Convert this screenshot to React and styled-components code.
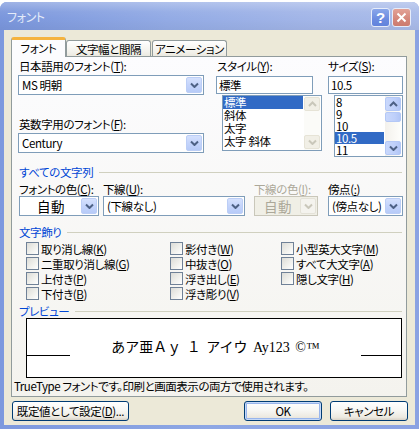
import React from "react";
import styled, { createGlobalStyle, css } from "styled-components";

const Global = createGlobalStyle`
  html, body { margin: 0; padding: 0; background: #ffffff; }
  body {
    font-family: "Noto Sans CJK JP", "Noto Sans", sans-serif;
    font-size: 11.5px;
    letter-spacing: -0.4px;
    color: #000;
    font-feature-settings: "palt";
  }
  * { box-sizing: border-box; }
  u { text-decoration: underline; text-underline-offset: 1px; text-decoration-thickness: 1px; }
`;

const Page = styled.div`
  width: 419px;
  height: 429px;
  padding-top: 2px;
  background: #ffffff;
  overflow: hidden;
`;

const Window = styled.div`
  width: 419px;
  height: 427px;
  display: flex;
  flex-direction: column;
  border-radius: 7px 7px 0 0;
  overflow: hidden;
  background: linear-gradient(90deg, #7d99de, #8ea7e4 50%, #8aa2e2);
`;

const TitleBar = styled.div`
  height: 28px;
  flex: none;
  display: flex;
  align-items: center;
  gap: 2px;
  padding: 2px 8px 0 7px;
  background:
    linear-gradient(180deg, rgba(255,255,255,0.28) 0, rgba(255,255,255,0.05) 35%, rgba(255,255,255,0) 60%, rgba(0,0,0,0.04) 100%),
    linear-gradient(90deg, #7a96dc 0%, #93abe5 40%, #a3b6e8 75%, #a9bbe9 100%);
`;

const Title = styled.div`
  flex: 1;
  color: #e4ebf9;
  font-size: 12px;
  line-height: 14px;
`;

const CaptionButton = styled.div`
  width: 19px;
  height: 19px;
  border-radius: 3px;
  border: 1px solid #e6ecfa;
  display: flex;
  align-items: center;
  justify-content: center;
  color: #fff;
  font-family: "Liberation Sans", sans-serif;
  font-weight: bold;
  font-size: 15px;
  letter-spacing: 0;
  line-height: 1;
  ${(p) =>
    p.$close
      ? css`background: linear-gradient(180deg, #e2a297, #d4867a 60%, #cc7b6f);`
      : css`background: linear-gradient(180deg, #8aa7ea, #6b8be0 60%, #6283dc);`}
`;

const Body = styled.div`
  flex: 1;
  margin: 0 4px 4px;
  background: #ece9d8;
  padding: 7px 8px 4px 7px;
  display: flex;
  flex-direction: column;
`;

const TabStrip = styled.div`
  height: 20px;
  margin-bottom: -1px;
  display: flex;
  align-items: flex-end;
  position: relative;
  z-index: 2;
`;

const Tab = styled.div`
  display: flex;
  align-items: center;
  justify-content: center;
  border: 1px solid #919b9c;
  border-radius: 3px 3px 0 0;
  line-height: 14px;
  white-space: nowrap;
  width: ${(p) => p.$w}px;
  margin-left: ${(p) => p.$ml || 0}px;
  ${(p) =>
    p.$active
      ? css`
          height: 20px;
          border-bottom: none;
          border-top: 3px solid #f5b33e;
          background: #fcfcfe;
          padding-bottom: 1px;
        `
      : css`
          height: 16px;
          margin-bottom: 1px;
          border-bottom: none;
          background: linear-gradient(180deg, #ffffff, #f3f2ec 70%, #ebe9e0);
        `}
`;

const Panel = styled.div`
  height: 341px;
  border: 1px solid #919b9c;
  background: linear-gradient(180deg, #fcfcfe, #f4f3ee);
  padding: 2px 3px 0 6px;
  display: flex;
  flex-direction: column;
`;

const TopRow = styled.div`
  display: flex;
  align-items: flex-start;
  height: 98px;
`;

const Col = styled.div`
  display: flex;
  flex-direction: column;
  width: ${(p) => p.$w}px;
  margin-left: ${(p) => p.$ml || 0}px;
`;

const Label = styled.div`
  height: 14px;
  line-height: 14px;
  white-space: nowrap;
  margin-top: ${(p) => p.$mt || 0}px;
  margin-left: ${(p) => p.$ml || 0}px;
  color: ${(p) => (p.$disabled ? "#aca899" : "#000")};
`;

const ComboBox = styled.div`
  height: 20px;
  margin-top: ${(p) => p.$mt || 0}px;
  border: 1px solid ${(p) => (p.$disabled ? "#c9c7ba" : "#7f9db9")};
  background: ${(p) => (p.$disabled ? "#f0efe6" : "#ffffff")};
  display: flex;
  align-items: center;
  padding: 1px;
`;

const ComboText = styled.div`
  flex: 1;
  line-height: 16px;
  padding-left: ${(p) => (p.$center ? 0 : 2)}px;
  text-align: ${(p) => (p.$center ? "center" : "left")};
  font-size: ${(p) => (p.$center ? "13.5px" : "inherit")};
  letter-spacing: ${(p) => (p.$center ? "0.5px" : "inherit")};
  color: ${(p) => (p.$disabled ? "#aca899" : "#000")};
  white-space: nowrap;
`;

const DropButton = styled.div`
  width: 16px;
  height: 16px;
  border-radius: 2px;
  display: flex;
  align-items: center;
  justify-content: center;
  ${(p) =>
    p.$disabled
      ? css`
          background: #f4f3ee;
          border: 1px solid #e4e2d8;
        `
      : css`
          background: linear-gradient(180deg, #d5e1fd, #c4d4fb 50%, #b7cbf8);
          border: 1px solid #bccef6;
        `}
`;

const TextBox = styled.div`
  height: 18px;
  margin-top: 3px;
  width: ${(p) => p.$w}px;
  border: 1px solid #7f9db9;
  background: #ffffff;
  line-height: 16px;
  padding-left: 2px;
`;

const ListBox = styled.div`
  margin-top: 1px;
  margin-left: 6px;
  width: ${(p) => p.$w}px;
  height: ${(p) => p.$h}px;
  border: 1px solid #7f9db9;
  background: #ffffff;
  display: flex;
  padding: 0 1px 0 0;
`;

const Items = styled.div`
  flex: 1;
  margin-right: 1px;
`;

const Item = styled.div`
  height: ${(p) => p.$h || 12}px;
  line-height: ${(p) => p.$h || 12}px;
  padding-left: 1px;
  white-space: nowrap;
  ${(p) =>
    p.$sel &&
    css`
      background: #316ac5;
      color: #ffffff;
    `}
`;

const ScrollBar = styled.div`
  width: 16px;
  padding: 1px 0;
  display: flex;
  flex-direction: column;
  background: ${(p) => (p.$disabled ? "#fbfbf8" : "linear-gradient(90deg, #f3f1ec, #fefefb)")};
`;

const ScrollBtn = styled.div`
  height: 14px;
  border-radius: 2px;
  display: flex;
  align-items: center;
  justify-content: center;
  ${(p) =>
    p.$disabled
      ? css`
          background: #f1efe6;
          border: 1px solid #e6e3d6;
        `
      : css`
          background: linear-gradient(90deg, #c9d8fc, #bfd0fa 60%, #b2c6f6);
          border: 1px solid #b4c8f6;
        `}
`;

const Track = styled.div`
  flex: 1;
  display: flex;
  flex-direction: column;
  padding-top: 1px;
`;

const Thumb = styled.div`
  height: 10px;
  border-radius: 2px;
  border: 1px solid #b4c8f6;
  background: linear-gradient(90deg, #c9d8fc, #bfd0fa 60%, #b2c6f6);
`;

const GroupHeader = styled.div`
  display: flex;
  align-items: center;
  height: 14px;
  margin-top: ${(p) => p.$mt}px;
  margin-left: 1px;
  margin-right: 1px;
  color: #0046d5;
  line-height: 14px;
  white-space: nowrap;
  &::after {
    content: "";
    flex: 1;
    height: 1px;
    margin-left: 6px;
    background: #d0d0bf;
  }
`;

const FieldsRow = styled.div`
  display: flex;
  margin-top: 3px;
`;

const Field = styled.div`
  width: ${(p) => p.$w}px;
  margin-left: ${(p) => p.$ml}px;
  display: flex;
  flex-direction: column;
`;

const Checks = styled.div`
  margin-top: 2px;
  margin-left: 8px;
  display: grid;
  grid-template-columns: 144px 111px 1fr;
  grid-template-rows: repeat(4, 15px);
  grid-auto-flow: column;
`;

const CheckRow = styled.label`
  display: flex;
  align-items: center;
  gap: 2px;
  white-space: nowrap;
  line-height: 14px;
`;

const Box = styled.span`
  width: 13px;
  height: 13px;
  flex: none;
  border: 1px solid #6f8197;
  background: linear-gradient(135deg, #dcdcd7, #f0f0ec 55%, #ffffff);
`;

const Preview = styled.div`
  margin-left: 8px;
  width: 376px;
  height: 60px;
  border: 1px solid #000;
  background: #ffffff;
  display: flex;
  align-items: center;
`;

const Baseline = styled.div`
  width: ${(p) => p.$w}px;
  height: 1px;
  margin-top: 15px;
  background: #000;
  flex: none;
`;

const PreviewText = styled.div`
  flex: 1;
  text-align: center;
  font-family: "Liberation Serif", "Noto Sans CJK JP", serif;
  font-size: 14px;
  letter-spacing: 0;
  word-spacing: 2px;
  line-height: 16px;
  white-space: nowrap;
  font-feature-settings: normal;
`;

const Info = styled.div`
  margin-top: 1px;
  margin-left: -4px;
  height: 14px;
  line-height: 14px;
  letter-spacing: -0.45px;
  white-space: nowrap;
`;

const ButtonRow = styled.div`
  display: flex;
  margin-top: 4px;
  margin-left: 1px;
  margin-right: -1px;
  height: 20px;
`;

const Button = styled.div`
  width: ${(p) => p.$w}px;
  margin-left: ${(p) => p.$ml || 0}px;
  height: 20px;
  border: 1px solid #003c74;
  border-radius: 3px;
  background: linear-gradient(180deg, #ffffff 0%, #f7f7f4 45%, #ece9e0 85%, #d8d2c6 100%);
  display: flex;
  align-items: center;
  justify-content: center;
  line-height: 14px;
  white-space: nowrap;
  ${(p) =>
    p.$default &&
    css`
      box-shadow: inset 0 0 0 1px #c5d9f8, inset 0 0 0 2px #98b5ec;
    `}
`;

const Spacer = styled.div`
  flex: 1;
`;

const Chevron = ({ up, disabled }) => (
  <svg width="9" height="6" viewBox="0 0 9 6">
    <path
      d={up ? "M1 5 L4.5 1.5 L8 5" : "M1 1.5 L4.5 5 L8 1.5"}
      fill="none"
      stroke={disabled ? "#c9c7ba" : "#4d6185"}
      strokeWidth="2"
    />
  </svg>
);

const Combo = ({ text, center, disabled, mt }) => (
  <ComboBox $disabled={disabled} $mt={mt}>
    <ComboText $center={center} $disabled={disabled}>{text}</ComboText>
    <DropButton $disabled={disabled}>
      <Chevron disabled={disabled} />
    </DropButton>
  </ComboBox>
);

const Scroll = ({ disabled }) => (
  <ScrollBar $disabled={disabled}>
    <ScrollBtn $disabled={disabled}>
      <Chevron up disabled={disabled} />
    </ScrollBtn>
    <Track>{!disabled && <Thumb />}</Track>
    <ScrollBtn $disabled={disabled}>
      <Chevron disabled={disabled} />
    </ScrollBtn>
  </ScrollBar>
);

const Check = ({ children }) => (
  <CheckRow>
    <Box />
    <span>{children}</span>
  </CheckRow>
);

export default function App() {
  return (
    <Page>
      <Global />
      <Window>
        <TitleBar>
          <Title>フォント</Title>
          <CaptionButton>?</CaptionButton>
          <CaptionButton $close>
            <svg width="11" height="11" viewBox="0 0 11 11">
              <path d="M1.5 1.5 L9.5 9.5 M9.5 1.5 L1.5 9.5" stroke="#fff" strokeWidth="2" />
            </svg>
          </CaptionButton>
        </TitleBar>
        <Body>
          <TabStrip>
            <Tab $active $w={55}>フォント</Tab>
            <Tab $w={85}>文字幅と間隔</Tab>
            <Tab $w={75} $ml={1}>アニメーション</Tab>
          </TabStrip>
          <Panel>
            <TopRow>
              <Col $w={186}>
                <Label $ml={1}>日本語用のフォント(<u>T</u>):</Label>
                <Combo text="MS 明朝" mt={2} />
                <Label $ml={1} $mt={22}>英数字用のフォント(<u>F</u>):</Label>
                <Combo text="Century" mt={2} />
              </Col>
              <Col $w={106} $ml={12}>
                <Label $ml={1}>スタイル(<u>Y</u>):</Label>
                <TextBox $w={97}>標準</TextBox>
                <ListBox $w={100} $h={56}>
                  <Items>
                    <Item $h={13} $sel>標準</Item>
                    <Item $h={13}>斜体</Item>
                    <Item $h={13}>太字</Item>
                    <Item $h={13}>太字 斜体</Item>
                  </Items>
                  <Scroll disabled />
                </ListBox>
              </Col>
              <Col $w={75} $ml={6}>
                <Label>サイズ(<u>S</u>):</Label>
                <TextBox $w={75}>10.5</TextBox>
                <ListBox $w={69} $h={62}>
                  <Items>
                    <Item>8</Item>
                    <Item>9</Item>
                    <Item>10</Item>
                    <Item $sel>10.5</Item>
                    <Item>11</Item>
                  </Items>
                  <Scroll />
                </ListBox>
              </Col>
            </TopRow>

            <GroupHeader $mt={8}>すべての文字列</GroupHeader>
            <FieldsRow>
              <Field $w={80} $ml={1}>
                <Label>フォントの色(<u>C</u>):</Label>
                <Combo text="自動" center />
              </Field>
              <Field $w={142} $ml={4}>
                <Label>下線(<u>U</u>):</Label>
                <Combo text="(下線なし)" />
              </Field>
              <Field $w={64} $ml={9}>
                <Label $disabled>下線の色(<u>I</u>):</Label>
                <Combo text="自動" center disabled />
              </Field>
              <Field $w={75} $ml={10}>
                <Label>傍点(<u>:</u>)</Label>
                <Combo text="(傍点なし)" />
              </Field>
            </FieldsRow>

            <GroupHeader $mt={9}>文字飾り</GroupHeader>
            <Checks>
              <Check>取り消し線(<u>K</u>)</Check>
              <Check>二重取り消し線(<u>G</u>)</Check>
              <Check>上付き(<u>P</u>)</Check>
              <Check>下付き(<u>B</u>)</Check>
              <Check>影付き(<u>W</u>)</Check>
              <Check>中抜き(<u>O</u>)</Check>
              <Check>浮き出し(<u>E</u>)</Check>
              <Check>浮き彫り(<u>V</u>)</Check>
              <Check>小型英大文字(<u>M</u>)</Check>
              <Check>すべて大文字(<u>A</u>)</Check>
              <Check>隠し文字(<u>H</u>)</Check>
            </Checks>

            <GroupHeader $mt={3}>プレビュー</GroupHeader>
            <Preview>
              <Baseline $w={43} />
              <PreviewText>あア亜Ａｙ １ アイウ Ay123 ©™</PreviewText>
              <Baseline $w={40} />
            </Preview>
            <Info>TrueType フォントです。印刷と画面表示の両方で使用されます。</Info>
          </Panel>
          <ButtonRow>
            <Button $w={117}>既定値として設定(<u>D</u>)...</Button>
            <Spacer />
            <Button $w={78} $default>OK</Button>
            <Button $w={78} $ml={8}>キャンセル</Button>
          </ButtonRow>
        </Body>
      </Window>
    </Page>
  );
}
